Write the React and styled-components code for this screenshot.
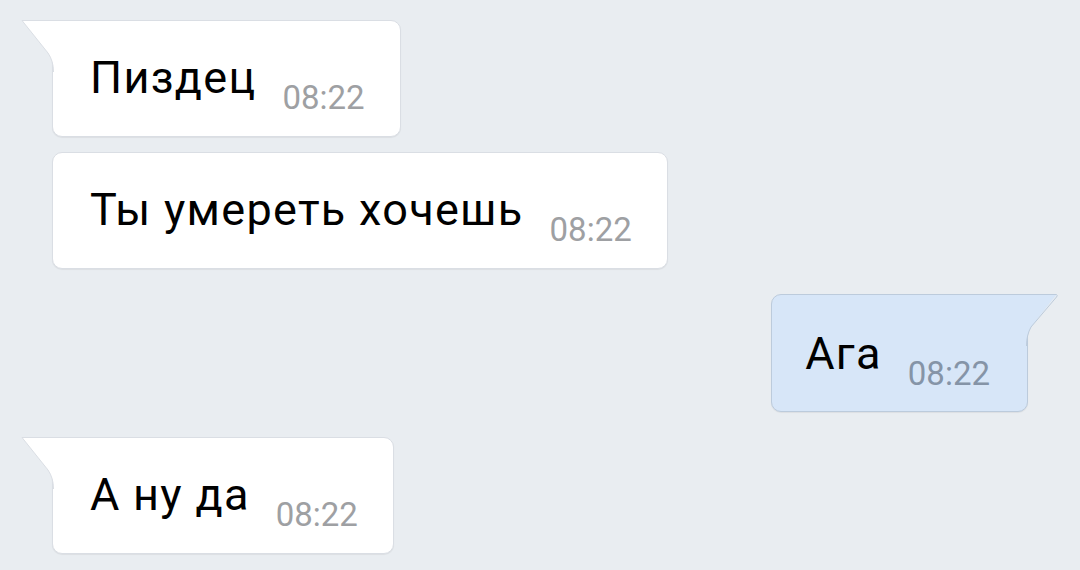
import React from 'react'
import styled, { createGlobalStyle, css } from 'styled-components'

const GlobalStyle = createGlobalStyle`
  html, body {
    margin: 0;
    padding: 0;
    background: #e9edf1;
  }
  body {
    font-family: Roboto, "Liberation Sans", sans-serif;
  }
`

const Chat = styled.div`
  width: 1080px;
  height: 570px;
  box-sizing: border-box;
  padding: 20px 52px 0;
  display: flex;
  flex-direction: column;
  overflow: hidden;
`

const Row = styled.div`
  display: flex;
  justify-content: ${p => (p.$out ? 'flex-end' : 'flex-start')};
  margin-top: ${p => p.$gap}px;
`

const Bubble = styled.div`
  position: relative;
  display: flex;
  align-items: flex-start;
  gap: 26px;
  padding: 31px 35px 32px 37px;
  border-radius: 10px;
  background: #ffffff;
  border: 1px solid #dadee4;
  box-shadow: 0 1px 1px rgba(0, 0, 0, 0.06);

  ${p => p.$tail && css`border-top-left-radius: 0;`}

  ${p => p.$out && css`
    background: #d7e6f8;
    border-color: #bccbdc;
    padding: 33px 37px 31px 33px;
    border-top-left-radius: 10px;
    border-top-right-radius: 0;
  `}
`

const Tail = styled.svg`
  position: absolute;
  top: -1px;
  width: 34px;
  height: 52px;
  ${p => (p.$out ? css`right: -32px;` : css`left: -32px;`)}
`

const Text = styled.span`
  font-size: 45px;
  line-height: 52px;
  letter-spacing: 1.3px;
  color: #000;
  white-space: nowrap;
`

const Time = styled.span`
  font-size: 33px;
  line-height: 12px;
  margin-top: 40px;
  color: ${p => (p.$out ? '#8594a7' : '#9ea0a3')};
  white-space: nowrap;
`

const InTail = () => (
  <Tail $out={false} viewBox="0 0 34 52">
    <path d="M34 0.5 L1 0.5 L27 33 Q32.5 41 32.5 52 L34 52 Z" fill="#ffffff" />
    <path d="M34 0.5 L1 0.5 L27 33 Q32.5 41 32.5 52" fill="none" stroke="#dadee4" strokeWidth="1" />
  </Tail>
)

const OutTail = () => (
  <Tail $out viewBox="0 0 34 52">
    <path d="M0 0.5 L31.5 0.5 L6 33 Q1.5 41 1.5 52 L0 52 Z" fill="#d7e6f8" />
    <path d="M0 0.5 L31.5 0.5 Q33 1.5 31.5 3 L6 33 Q1.5 41 1.5 52" fill="none" stroke="#bccbdc" strokeWidth="1" />
  </Tail>
)

const messages = [
  { text: 'Пиздец', time: '08:22', out: false, tail: true, gap: 0 },
  { text: 'Ты умереть хочешь', time: '08:22', out: false, tail: false, gap: 15 },
  { text: 'Ага', time: '08:22', out: true, tail: true, gap: 25 },
  { text: 'А ну да', time: '08:22', out: false, tail: true, gap: 25 },
]

const App = () => {
  return (
    <>
      <GlobalStyle />
      <Chat>
        {messages.map((m, i) => (
          <Row key={i} $out={m.out} $gap={m.gap}>
            <Bubble $out={m.out} $tail={m.tail}>
              {m.tail && (m.out ? <OutTail /> : <InTail />)}
              <Text>{m.text}</Text>
              <Time $out={m.out}>{m.time}</Time>
            </Bubble>
          </Row>
        ))}
      </Chat>
    </>
  )
}

export default App
